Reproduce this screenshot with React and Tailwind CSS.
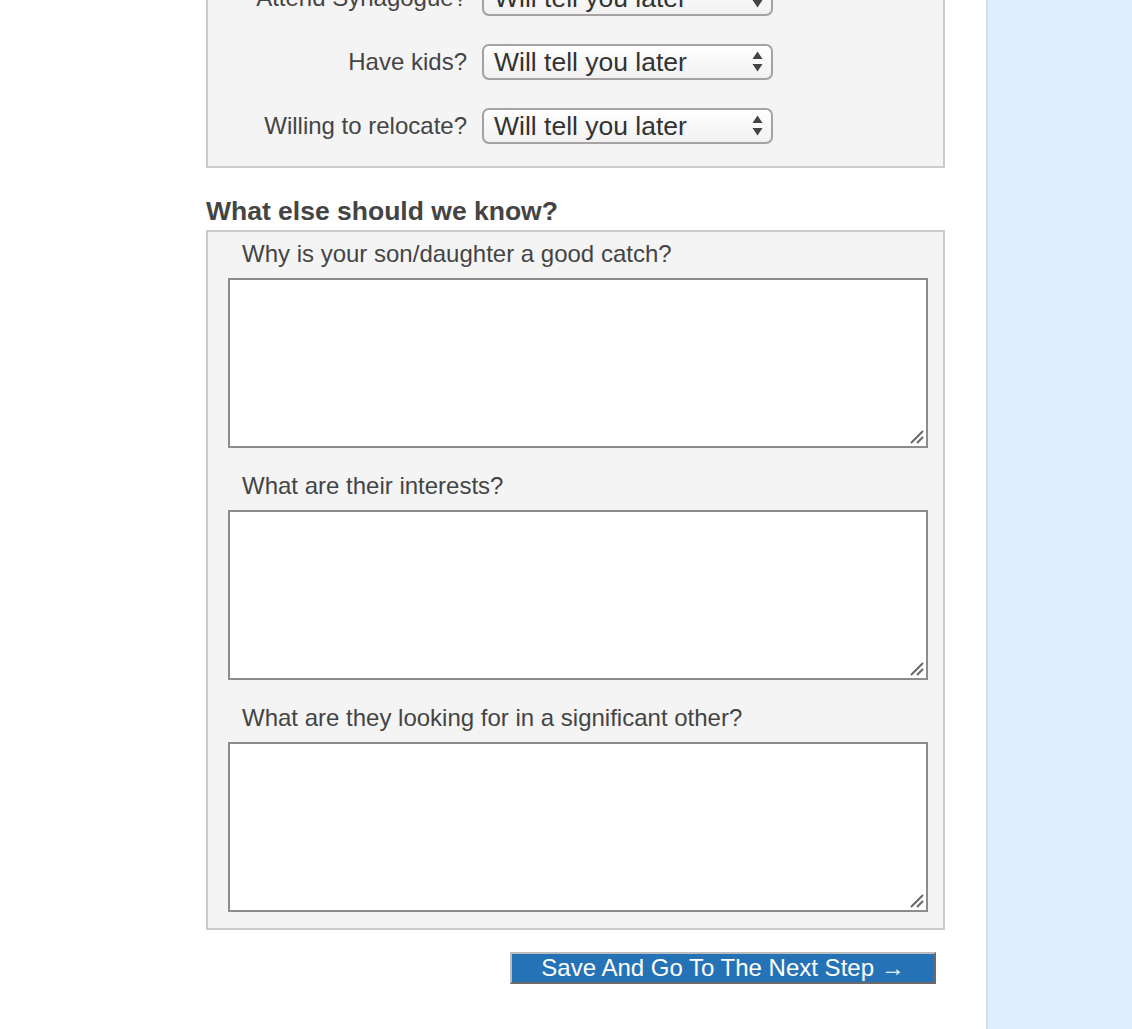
import React from 'react';

// Fake <select> look-alike so the mac-style control renders the same everywhere
const FakeSelect = ({ value }) => (
    <div className="flex h-[36px] w-[291px] items-center justify-between rounded-[7px] border-2 border-[#a3a3a3] bg-gradient-to-b from-white to-[#f1f1f1] pl-[10px] pr-[8px] text-[26.5px] leading-none text-[#333]">
        <span>{value}</span>
        <svg width="11" height="22" viewBox="0 0 11 22" className="shrink-0">
            <path d="M5.5 0.5 L10.5 8 L0.5 8 Z" fill="#444" />
            <path d="M0.5 13 L10.5 13 L5.5 20.5 Z" fill="#444" />
        </svg>
    </div>
);

const SelectRow = ({ label }) => (
    <div className="flex items-center">
        <div className="w-[274px] pr-[15px] text-right text-[24px] leading-[28px] text-[#444]">{label}</div>
        <FakeSelect value="Will tell you later" />
    </div>
);

// Textarea with a hand drawn resize grip in the corner
const TextBox = ({ label }) => (
    <div>
        <div className="pl-[14px] text-[24px] leading-[28px] text-[#444]">{label}</div>
        <div className="relative mt-[10px] h-[170px] w-[700px]">
            <textarea className="block h-full w-full resize-none border-2 border-[#8c8c8c] bg-white outline-none" />
            <svg width="16" height="16" viewBox="0 0 16 16" className="pointer-events-none absolute bottom-[3px] right-[3px]">
                <path d="M2 14 L14 2" stroke="#666" strokeWidth="2" />
                <path d="M8 14 L14 8" stroke="#666" strokeWidth="2" />
            </svg>
        </div>
    </div>
);

export default function App() {
    return (
        <div className="flex min-h-screen bg-white font-['Liberation_Sans',Arial,sans-serif]">
            <main className="w-[986px] shrink-0 pl-[206px]">
                <div className="w-[739px]">

                    {/* --- preferences fieldset (scrolled, top is cut off) --- */}
                    <div className="-mt-[22px] flex flex-col gap-[28px] border-2 border-[#cccccc] bg-[#f4f4f4] pb-[22px]">
                        <SelectRow label="Attend Synagogue?" />
                        <SelectRow label="Have kids?" />
                        <SelectRow label="Willing to relocate?" />
                    </div>

                    <h2 className="mt-[28px] mb-[4px] text-[26.5px] font-bold leading-[30px] text-[#444]">
                        What else should we know?
                    </h2>

                    {/* --- free text questions --- */}
                    <div className="flex flex-col gap-[24px] border-2 border-[#cccccc] bg-[#f4f4f4] pt-[8px] pb-[16px] pl-[20px]">
                        <TextBox label="Why is your son/daughter a good catch?" />
                        <TextBox label="What are their interests?" />
                        <TextBox label="What are they looking for in a significant other?" />
                    </div>

                    <div className="mt-[22px] flex justify-end pr-[9px]">
                        <button className="h-[32px] w-[426px] border-2 border-t-[#bdbdbd] border-l-[#bdbdbd] border-r-[#6a6a6a] border-b-[#6a6a6a] bg-[#2672b6] text-[24px] leading-none text-white">
                            Save And Go To The Next Step →
                        </button>
                    </div>
                </div>
            </main>

            <aside className="flex-1 border-l-2 border-[#d8dde1] bg-[#dfeefd]" />
        </div>
    );
}
